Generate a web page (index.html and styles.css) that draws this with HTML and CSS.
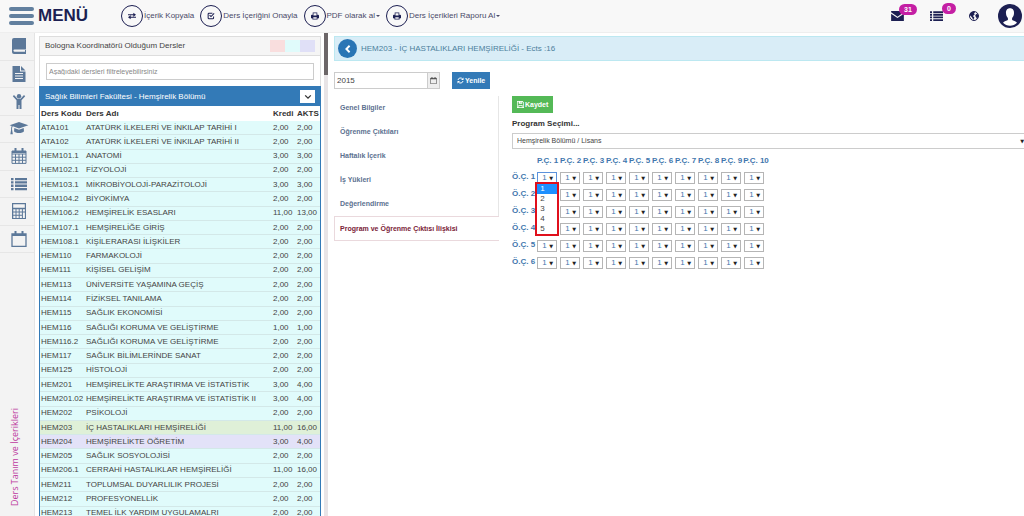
FILE: index.html
```html
<!DOCTYPE html>
<html lang="tr">
<head>
<meta charset="utf-8">
<title>Ders Tanım ve İçerikleri</title>
<link rel="stylesheet" href="styles.css">
</head>
<body>
<svg class="defs" aria-hidden="true">
  <symbol id="i-book" viewBox="0 0 16 16"><path d="M3 0h12v11.500H3.500a1 1 0 0 0 0 2.200H14V12h1v4H3a2 2 0 0 1-2-2V2a2 2 0 0 1 2-2z"/></symbol>
  <symbol id="i-file" viewBox="0 0 16 16"><path fill-rule="evenodd" d="M1.500 0H9v5.500h5.500V16h-13zM10 0l4.500 4.500H10zM4 7v1h8V7zm0 2.500v1h8v-1zM4 12v1h8v-1z"/></symbol>
  <symbol id="i-child" viewBox="0 0 16 16"><circle cx="8" cy="3.200" r="2.200"/><path d="M3 2l3.500 3.700h3L13 2l1.200 1.200-3.700 4V16H8.500v-4h-1v4h-2V7.200l-3.700-4z"/></symbol>
  <symbol id="i-cap" viewBox="0 0 20 16"><path d="M10 1l10 3.500L10 8 3.500 5.700C2.600 6.300 2.600 8 2.600 9l.8 5H.8l.8-5c0-1.500.1-3 .7-3.700L0 4.500zM5 7.500l5 1.800 5-1.800.3 3.500c-1 2.500-9.600 2.500-10.600 0z"/></symbol>
  <symbol id="i-calendar" viewBox="0 0 16 16"><path fill="none" stroke="currentColor" stroke-width="1" d="M1 3h14v12.400H1zM1 6h14M1 9.200h14M1 12.300h14M4.500 6v9.400M8 6v9.400M11.500 6v9.400"/><path d="M1 3h14v2H1zM3.500 0h2v4h-2zM10.500 0h2v4h-2z"/></symbol>
  <symbol id="i-list" viewBox="0 0 16 14"><path d="M0 1h2.500v2.300H0zm4 0h12v2.300H4zM0 4.300h2.500v2.300H0zm4 0h12v2.300H4zM0 7.600h2.500v2.300H0zm4 0h12v2.300H4zM0 11h2.500v2.300H0zm4 0h12v2.300H4z"/></symbol>
  <symbol id="i-calc" viewBox="0 0 16 16"><path fill-rule="evenodd" d="M1 0h14v16H1zm1.200 1.300v3.500h11.600V1.300zM2.300 6.300v2.200h2.200V6.300zm3.200 0v2.200h2.200V6.300zm3.200 0v2.200h2.200V6.300zm3.200 0v2.200h2V6.300zM2.300 9.500v2.200h2.200V9.500zm3.200 0v2.200h2.200V9.500zm3.200 0v2.200h2.200V9.500zM2.300 12.700v2.200h2.200v-2.200zm3.200 0v2.200h2.200v-2.200zm3.200 0v2.200h2.200v-2.200zm3.200-3.200v5.400h2V9.500z"/></symbol>
  <symbol id="i-day" viewBox="0 0 16 16"><path fill="none" stroke="currentColor" stroke-width="1.300" d="M1 3h14v12.300H1z"/><path d="M1 3h14v2H1zM3.500 0h2v4h-2zM10.500 0h2v4h-2z"/></symbol>
  <symbol id="i-swap" viewBox="0 0 12 10"><path d="M0 2.300h8V0l4 3-4 3V3.700H0zM12 7.700H4V10L0 7l4-3v2.300h8z"/></symbol>
  <symbol id="i-check" viewBox="0 0 14 14"><path fill="none" stroke="currentColor" stroke-width="1.800" d="M9.500 2H3.500A1.500 1.500 0 0 0 2 3.500v7A1.500 1.500 0 0 0 3.500 12h6.500a1.500 1.500 0 0 0 1.500-1.500V8M4.500 5.500L7 8l5.500-5.500"/></symbol>
  <symbol id="i-print" viewBox="0 0 14 14"><path fill-rule="evenodd" d="M3 1h8v4h1.500A1.500 1.500 0 0 1 14 6.500V11h-2.500v2h-9v-2H0V6.500A1.500 1.500 0 0 1 1.500 5H3zm1.300 1.300v4h5.400v-4zM4 9v2.700h6V9z"/></symbol>
  <symbol id="i-mail" viewBox="0 0 14 11"><path d="M0 0h14v1.500L7 6.300 0 1.500zM0 3l7 4.800L14 3v8H0z"/></symbol>
  <symbol id="i-globe" viewBox="0 0 14 14"><circle cx="7" cy="7" r="6.300" fill="none" stroke="currentColor" stroke-width="1.400"/><path d="M2 2.500L6.500.7 8.500 2 7 3.500 8 5 5.500 7l2 2-1.500 3.500-1.500-3L2.500 7 1 6zM9.500 5l2-1.500L13 6l-.6 3.500L10.500 11 10 8.500 8.500 7z"/></symbol>
  <symbol id="i-user" viewBox="0 0 24 24"><circle cx="12" cy="12" r="12"/><path fill="#fff" d="M12 4.200c3 0 4.200 2.300 4 5-.1 2.200-.8 3.600-1.900 4.700v2c1 .9 3.900 1 4.900 2.900-3.600 3.800-10.400 3.800-14 0 1-1.900 3.900-2 4.900-2.900v-2C8.800 12.800 8.100 11.400 8 9.200c-.2-2.700 1-5 4-5z"/></symbol>
  <symbol id="i-left" viewBox="0 0 10 10"><path fill="none" stroke="currentColor" stroke-width="2.400" d="M7 1L3 5l4 4"/></symbol>
  <symbol id="i-down" viewBox="0 0 10 10"><path fill="none" stroke="currentColor" stroke-width="1.600" d="M1.500 3L5 6.500 8.500 3"/></symbol>
  <symbol id="i-refresh" viewBox="0 0 14 14"><path fill="none" stroke="currentColor" stroke-width="2" d="M2 6a5 5 0 0 1 9-2M12 8a5 5 0 0 1-9 2"/><path d="M13 .8V6H8zM1 13.200V8h5z"/></symbol>
  <symbol id="i-save" viewBox="0 0 12 12"><path fill-rule="evenodd" d="M0 0h9.500L12 2.500V12H0zm1.200 1.200v9.600h1.300V7h7v3.800h1.300V3L9 1.200V4.500H3V1.200zm4.800 0v2h1.500v-2zM3.700 8.200v2.600h4.600V8.200z"/></symbol>
</svg>

<header class="topbar">
  <button class="menu" type="button"><span class="burger"><i></i><i></i><i></i></span>MENÜ</button>
  <nav class="actions">
    <a href="#"><span class="ring"><svg><use href="#i-swap"/></svg></span>İçerik Kopyala</a>
    <a href="#"><span class="ring"><svg><use href="#i-check"/></svg></span>Ders İçeriğini Onayla</a>
    <a href="#"><span class="ring"><svg><use href="#i-print"/></svg></span>PDF olarak al<span class="caret"></span></a>
    <a href="#"><span class="ring"><svg><use href="#i-print"/></svg></span>Ders İçerikleri Raporu Al<span class="caret"></span></a>
  </nav>
  <div class="status">
    <a href="#" aria-label="Mesajlar"><svg class="s-mail"><use href="#i-mail"/></svg><span class="badge">31</span></a>
    <a href="#" aria-label="Görevler"><svg class="s-list"><use href="#i-list"/></svg><span class="badge">0</span></a>
    <a href="#" aria-label="Dil"><svg class="s-globe"><use href="#i-globe"/></svg></a>
    <a href="#" aria-label="Profil"><svg class="s-user"><use href="#i-user"/></svg></a>
  </div>
</header>

<div class="shell">
  <aside class="rail">
    <nav class="rail-nav">
      <a href="#" aria-label="Kitap"><svg><use href="#i-book"/></svg></a>
      <a href="#" aria-label="Belge"><svg><use href="#i-file"/></svg></a>
      <a href="#" aria-label="Öğrenci"><svg><use href="#i-child"/></svg></a>
      <a href="#" aria-label="Mezuniyet"><svg class="wide"><use href="#i-cap"/></svg></a>
      <a href="#" aria-label="Takvim"><svg><use href="#i-calendar"/></svg></a>
      <a href="#" aria-label="Liste"><svg><use href="#i-list"/></svg></a>
      <a href="#" aria-label="Hesap"><svg><use href="#i-calc"/></svg></a>
      <a href="#" aria-label="Gün"><svg><use href="#i-day"/></svg></a>
    </nav>
    <div class="rail-title">Ders Tanım ve İçerikleri</div>
  </aside>

  <section class="courses">
    <div class="courses-head"><span>Bologna Koordinatörü Olduğum Dersler</span><span class="keys"><i class="key-red"></i><i class="key-cyan"></i><i class="key-violet"></i></span></div>
    <div class="filter"><input type="text" placeholder="Aşağıdaki dersleri filtreleyebilirsiniz" aria-label="Ders filtresi"></div>
    <div class="group">
      <div class="group-head"><span>Sağlık Bilimleri Fakültesi - Hemşirelik Bölümü</span><button type="button" aria-label="Daralt"><svg><use href="#i-down"/></svg></button></div>
      <table class="list">
        <colgroup><col class="c-code"><col><col class="c-num"><col class="c-num"></colgroup>
        <thead><tr><th>Ders Kodu</th><th>Ders Adı</th><th>Kredi</th><th>AKTS</th></tr></thead>
        <tbody>
          <tr><td>ATA101</td><td>ATATÜRK İLKELERİ VE İNKILAP TARİHİ I</td><td>2,00</td><td>2,00</td></tr>
          <tr><td>ATA102</td><td>ATATÜRK İLKELERİ VE İNKILAP TARİHİ II</td><td>2,00</td><td>2,00</td></tr>
          <tr><td>HEM101.1</td><td>ANATOMİ</td><td>3,00</td><td>3,00</td></tr>
          <tr><td>HEM102.1</td><td>FİZYOLOJİ</td><td>2,00</td><td>2,00</td></tr>
          <tr><td>HEM103.1</td><td>MİKROBİYOLOJİ-PARAZİTOLOJİ</td><td>3,00</td><td>3,00</td></tr>
          <tr><td>HEM104.2</td><td>BİYOKİMYA</td><td>2,00</td><td>2,00</td></tr>
          <tr><td>HEM106.2</td><td>HEMŞİRELİK ESASLARI</td><td>11,00</td><td>13,00</td></tr>
          <tr><td>HEM107.1</td><td>HEMŞİRELİĞE GİRİŞ</td><td>2,00</td><td>2,00</td></tr>
          <tr><td>HEM108.1</td><td>KİŞİLERARASI İLİŞKİLER</td><td>2,00</td><td>2,00</td></tr>
          <tr><td>HEM110</td><td>FARMAKOLOJİ</td><td>2,00</td><td>2,00</td></tr>
          <tr><td>HEM111</td><td>KİŞİSEL GELİŞİM</td><td>2,00</td><td>2,00</td></tr>
          <tr><td>HEM113</td><td>ÜNİVERSİTE YAŞAMINA GEÇİŞ</td><td>2,00</td><td>2,00</td></tr>
          <tr><td>HEM114</td><td>FİZİKSEL TANILAMA</td><td>2,00</td><td>2,00</td></tr>
          <tr><td>HEM115</td><td>SAĞLIK EKONOMİSİ</td><td>2,00</td><td>2,00</td></tr>
          <tr><td>HEM116</td><td>SAĞLIĞI KORUMA VE GELİŞTİRME</td><td>1,00</td><td>1,00</td></tr>
          <tr><td>HEM116.2</td><td>SAĞLIĞI KORUMA VE GELİŞTİRME</td><td>2,00</td><td>2,00</td></tr>
          <tr><td>HEM117</td><td>SAĞLIK BİLİMLERİNDE SANAT</td><td>2,00</td><td>2,00</td></tr>
          <tr><td>HEM125</td><td>HİSTOLOJİ</td><td>2,00</td><td>2,00</td></tr>
          <tr><td>HEM201</td><td>HEMŞİRELİKTE ARAŞTIRMA VE İSTATİSTİK</td><td>3,00</td><td>4,00</td></tr>
          <tr><td>HEM201.02</td><td>HEMŞİRELİKTE ARAŞTIRMA VE İSTATİSTİK II</td><td>3,00</td><td>4,00</td></tr>
          <tr><td>HEM202</td><td>PSİKOLOJİ</td><td>2,00</td><td>2,00</td></tr>
          <tr class="selected"><td>HEM203</td><td>İÇ HASTALIKLARI HEMŞİRELİĞİ</td><td>11,00</td><td>16,00</td></tr>
          <tr class="violet"><td>HEM204</td><td>HEMŞİRELİKTE ÖĞRETİM</td><td>3,00</td><td>4,00</td></tr>
          <tr><td>HEM205</td><td>SAĞLIK SOSYOLOJİSİ</td><td>2,00</td><td>2,00</td></tr>
          <tr><td>HEM206.1</td><td>CERRAHİ HASTALIKLAR HEMŞİRELİĞİ</td><td>11,00</td><td>16,00</td></tr>
          <tr><td>HEM211</td><td>TOPLUMSAL DUYARLILIK PROJESİ</td><td>2,00</td><td>2,00</td></tr>
          <tr><td>HEM212</td><td>PROFESYONELLİK</td><td>2,00</td><td>2,00</td></tr>
          <tr><td>HEM213</td><td>TEMEL İLK YARDIM UYGULAMALRI</td><td>2,00</td><td>2,00</td></tr>
        </tbody>
      </table>
    </div>
  </section>
  <div class="scroll"><div class="thumb"></div></div>

  <main class="detail">
    <div class="title"><button type="button" aria-label="Geri"><svg><use href="#i-left"/></svg></button><span>HEM203 - İÇ HASTALIKLARI HEMŞİRELİĞİ - Ects :16</span></div>
    <div class="year">
      <div class="year-box"><input type="text" value="2015" aria-label="Yıl"><button type="button" aria-label="Yıl seç"><svg><use href="#i-day"/></svg></button></div>
      <button class="btn blue" type="button"><svg><use href="#i-refresh"/></svg>Yenile</button>
    </div>
    <div class="body">
      <nav class="tabs">
        <a href="#">Genel Bilgiler</a>
        <a href="#">Öğrenme Çıktıları</a>
        <a href="#">Haftalık İçerik</a>
        <a href="#">İş Yükleri</a>
        <a href="#">Değerlendirme</a>
        <a href="#" class="active">Program ve Öğrenme Çıktısı İlişkisi</a>
      </nav>
      <section class="relation">
        <button class="btn green" type="button"><svg><use href="#i-save"/></svg>Kaydet</button>
        <label class="caption" for="program">Program Seçimi...</label>
        <div class="pick program"><select id="program"><option>Hemşirelik Bölümü / Lisans</option></select></div>
        <table class="matrix">
          <thead><tr><td></td><th>P.Ç. 1</th><th>P.Ç. 2</th><th>P.Ç. 3</th><th>P.Ç. 4</th><th>P.Ç. 5</th><th>P.Ç. 6</th><th>P.Ç. 7</th><th>P.Ç. 8</th><th>P.Ç. 9</th><th>P.Ç. 10</th></tr></thead>
          <tbody id="matrix"></tbody>
        </table>
      </section>
    </div>
  </main>
</div>
<script src="matrix.js"></script>
</body>
</html>
```
FILE: matrix.js
```js
const body = document.getElementById('matrix');
for (let r = 1; r <= 6; r++) {
  const row = body.insertRow();
  const head = document.createElement('th');
  head.scope = 'row';
  head.textContent = 'Ö.Ç. ' + r;
  row.append(head);
  for (let c = 1; c <= 10; c++) {
    const open = r === 1 && c === 1;
    row.insertCell().innerHTML =
      `<div class="pick${open ? ' open' : ''}"><select aria-label="Ö.Ç. ${r} / P.Ç. ${c}">` +
      [1, 2, 3, 4, 5].map(n => `<option>${n}</option>`).join('') + '</select>' +
      (open ? '<ul class="options"><li class="on">1</li><li>2</li><li>3</li><li>4</li><li>5</li></ul>' : '') +
      '</div>';
  }
}
```
FILE: styles.css
```css
* { box-sizing: border-box; }
body {
  margin: 0;
  height: 100vh;
  display: flex;
  flex-direction: column;
  overflow: hidden;
  background: #fff;
  color: #444;
  font: 8px/12px "Liberation Sans", Arial, sans-serif;
}
button, input, select { font: inherit; color: inherit; margin: 0; padding: 0; border: 0; border-radius: 0; }
button { background: none; cursor: pointer; }
a { color: inherit; text-decoration: none; }
svg { display: block; fill: currentColor; }
.defs { display: none; }

.topbar {
  display: flex;
  align-items: center;
  height: 33px;
  flex: none;
  padding: 0 2px 0 9px;
  background: #f8f8f8;
  border-bottom: 1px solid #eee;
  color: #1c1f52;
}
.menu { display: flex; align-items: center; gap: 4px; width: 112px; font-size: 17px; font-weight: bold; line-height: 20px; }
.burger { display: flex; flex-direction: column; gap: 3px; width: 25px; }
.burger i { height: 4px; border-radius: 2px; background: #62809f; }
.actions { display: flex; gap: 6px; color: #4a4a68; }
.actions a { display: flex; align-items: center; gap: 1px; white-space: nowrap; }
.ring { display: grid; place-items: center; width: 22px; height: 22px; border: 1px solid #1c1f52; border-radius: 50%; color: #1c1f52; }
.ring svg { width: 8px; height: 8px; }
.caret { border: 2px solid transparent; border-top-color: #4a4a68; border-bottom: 0; }
.status { display: flex; align-items: center; margin-left: auto; }
.status a { position: relative; }
.s-mail { width: 13px; height: 10px; margin-right: 26px; }
.s-list { width: 13px; height: 12px; margin-right: 26px; }
.s-globe { width: 10px; height: 10px; margin-right: 19px; }
.s-user { width: 24px; height: 24px; }
.badge {
  position: absolute;
  left: 8px;
  top: -7px;
  padding: 0 5px;
  border-radius: 6px;
  background: #c41fa4;
  color: #fff;
  font-size: 7px;
  font-weight: bold;
  line-height: 11px;
}
.s-list + .badge { left: 12px; }

.shell { display: flex; flex: 1; min-height: 0; }
.rail { display: flex; flex-direction: column; justify-content: space-between; width: 35px; flex: none; background: #f3f3f3; border-right: 1px solid #e4e4e4; }
.rail-nav { display: flex; flex-direction: column; height: 220px; color: #5c7899; }
.rail-nav a { display: grid; place-items: center; flex: 1; padding-left: 4px; border-bottom: 1px solid #e6e6e6; }
.rail-nav svg { width: 16px; height: 16px; }
.rail-nav .wide { width: 20px; height: 15px; }
.rail-title {
  align-self: flex-start;
  margin: 0 0 10px 9px;
  writing-mode: vertical-rl;
  transform: rotate(180deg);
  color: #bd3aa0;
  font: 9px/12px "Open Sans", sans-serif;
}

.courses { width: 282px; flex: none; margin: 3px 3px 0 4px; overflow: hidden; }
.courses-head { display: flex; justify-content: space-between; align-items: center; height: 20px; padding: 0 5px; background: #f5f5f5; border: 1px solid #ddd; }
.keys { display: flex; }
.keys i { width: 15px; height: 12px; }
.key-red { background: #f9dede; }
.key-cyan { background: #e0fbfb; }
.key-violet { background: #e0e0f7; }
.filter { padding: 7px 6px 6px; border: solid #ddd; border-width: 0 1px; }
.filter input { display: block; width: 100%; height: 17px; padding: 0 2px; border: 1px solid #ccc; font-size: 7px; }
.filter input::placeholder { color: #888; }
.group { border: 1px solid #337ab7; }
.group-head { display: flex; justify-content: space-between; align-items: center; height: 19px; padding: 0 5px; background: #337ab7; color: #fff; }
.group-head button { display: grid; place-items: center; width: 15px; height: 13px; background: #fff; color: #333; }
.group-head svg { width: 8px; height: 8px; }
.list { width: 100%; height: 415px; table-layout: fixed; border-collapse: collapse; white-space: nowrap; }
.list th, .list td { padding: 0 1px; text-align: left; line-height: 12px; }
.list th { height: 15px; color: #333; }
.list td { border-bottom: 1px solid #d3e8e8; background: #e0fbfb; }
.list .selected td { background: #dff0d8; }
.list .violet td { background: #e3e2f8; }
.c-code { width: 45px; }
.c-num { width: 24px; }
.scroll { width: 4px; flex: none; background: #e8e4e6; }
.thumb { height: 42px; background: #6c6668; }

.detail { flex: 1; min-width: 0; padding: 3px 0 0 6px; }
.title { display: flex; align-items: center; gap: 4px; height: 25px; padding-left: 3px; background: #d9edf7; border: 1px solid #bce8f1; border-right: 0; color: #4b7f9c; }
.title button { display: grid; place-items: center; width: 19px; height: 19px; border-radius: 50%; background: #2a75b5; color: #fff; }
.title svg { width: 8px; height: 8px; }
.year { display: flex; gap: 12px; margin-top: 11px; }
.year-box { display: flex; width: 106px; height: 17px; border: 1px solid #ccc; }
.year-box input { flex: 1; min-width: 0; padding: 0 2px; }
.year-box button { display: grid; place-items: center; width: 12px; background: #eee; border-left: 1px solid #ccc; }
.year-box svg { width: 7px; height: 7px; }
.btn { display: inline-flex; align-items: center; gap: 1px; height: 17px; padding: 0 5px; color: #fff; font-size: 7px; font-weight: bold; }
.btn svg { width: 7px; height: 7px; }
.blue { background: #337ab7; }
.green { background: #54b957; }
.body { display: flex; align-items: flex-start; gap: 13px; margin-top: 7px; }
.tabs { width: 165px; flex: none; color: #5c7190; font-size: 7px; font-weight: bold; }
.tabs a { display: block; padding: 0 6px; line-height: 24px; border: solid #e6e6e6; border-width: 0 1px 0 0; }
.tabs .active { padding-left: 5px; border-color: #ead9dd; border-width: 1px 0 1px 1px; line-height: 23px; color: #7a2237; }
.relation { flex: 1; min-width: 0; }
.caption { display: block; margin: 5px 0 3px; color: #333; font-weight: bold; line-height: 12px; }
.pick { position: relative; }
.pick::after { content: "▼"; position: absolute; right: 4px; top: 0; color: #222; font: 5px/12px "DejaVu Sans", sans-serif; pointer-events: none; }
.pick select { display: block; width: 100%; height: 12px; padding: 0 4px; border: 1px solid #b5b5b5; background: #fff; appearance: none; line-height: 10px; }
.pick.program::after { right: 0; line-height: 16px; }
.pick.program select { height: 16px; border-color: #ccc; border-right: 0; font-size: 7px; }
.pick.open select { border-color: #5b92dc; }
.matrix { margin-top: 4px; border-collapse: collapse; color: #3f76ad; white-space: nowrap; }
.matrix th, .matrix td { padding: 0; height: 17px; }
.matrix thead th, .matrix thead td { height: 15px; }
.matrix tbody th { padding-right: 1px; }
.matrix tbody td { padding: 4px 2px 1px 1px; }
.matrix .pick { width: 20px; }
.options { position: absolute; z-index: 1; left: -1px; top: 11px; width: 22px; margin: 0; padding: 0; list-style: none; border: 1px solid #e0101c; outline: 1px solid #e0101c; background: #fff; color: #444; }
.options li { padding-left: 3px; line-height: 10px; }
.options .on { background: #1e90ff; color: #fff; }
```
